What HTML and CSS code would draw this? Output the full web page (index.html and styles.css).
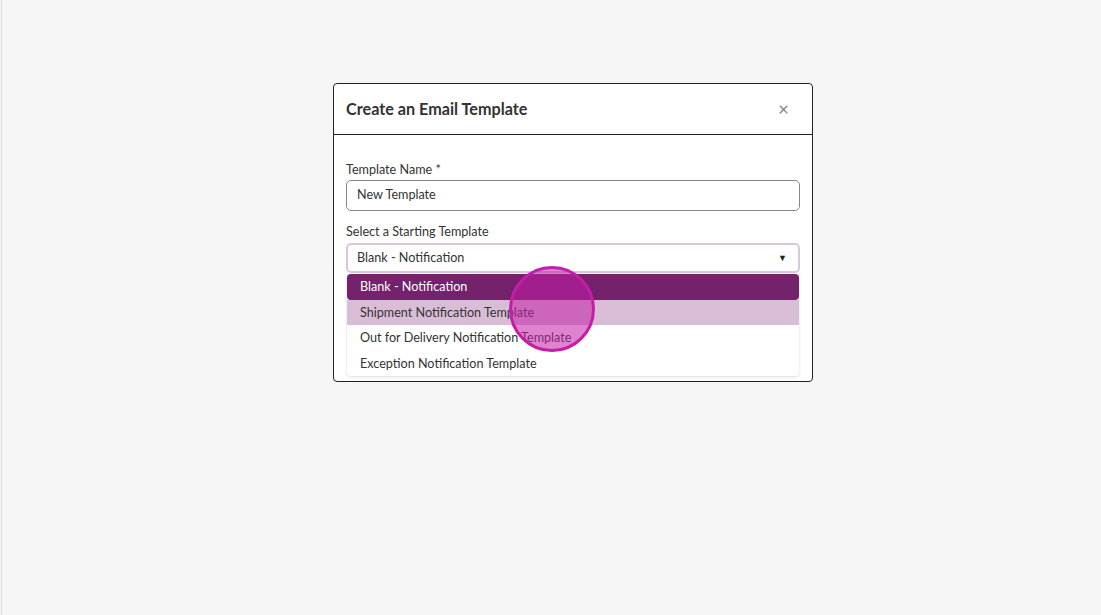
FILE: index.html
```html
<!DOCTYPE html>
<html>
<head>
<meta charset="utf-8">
<link rel="stylesheet" href="styles.css">
</head>
<body>
<div class="page">
  <div class="modal">
    <div class="modal-header">
      <h2 class="modal-title">Create an Email Template</h2>
      <span class="close">&times;</span>
    </div>
    <div class="modal-body">
      <label class="field-label">Template Name *</label>
      <div class="input">New Template</div>
      <label class="field-label second">Select a Starting Template</label>
      <div class="select">
        <span>Blank - Notification</span>
        <span class="caret">&#9660;</span>
      </div>
      <ul class="menu">
        <li class="item selected">Blank - Notification</li>
        <li class="item hover">Shipment Notification Template</li>
        <li class="item">Out for Delivery Notification Template</li>
        <li class="item">Exception Notification Template</li>
      </ul>
      <div class="click-marker"></div>
    </div>
  </div>
</div>
</body>
</html>
```
FILE: styles.css
```css
html, body {
  margin: 0;
  padding: 0;
  height: 100%;
}
body {
  background: #f5f6f5;
  font-family: Lato, "Open Sans", sans-serif;
  color: #333;
}
.page {
  height: 100%;
  box-sizing: border-box;
  border-left: 1px solid #dcdddc;
  margin-left: 1px;
  padding: 83px 0 0 331px;
}
.modal {
  width: 478px;
  background: #fff;
  border: 1px solid #222;
  border-radius: 4px;
}
.modal-header {
  height: 50px;
  border-bottom: 1px solid #222;
  display: flex;
  align-items: center;
  justify-content: space-between;
  padding: 0 23px 2px 12px;
  box-sizing: border-box;
  height: 51px;
}
.modal-title {
  margin: 0;
  font-size: 16.2px;
  font-weight: 700;
  color: #333;
}
.close {
  font-size: 19px;
  color: #888;
  line-height: 1;
}
.modal-body {
  position: relative;
  padding: 27px 12px 5px 12px;
}
.field-label {
  display: block;
  font-size: 12.6px;
  line-height: 16px;
  color: #333;
  margin-bottom: 2px;
}
.field-label.second {
  margin-top: 13px;
  margin-bottom: 3px;
}
.input {
  height: 29px;
  border: 1px solid #888;
  border-radius: 5px;
  display: flex;
  align-items: center;
  padding: 0 0 2px 10px;
  box-sizing: border-box;
  height: 31px;
  font-size: 12.6px;
}
.select {
  height: 30px;
  box-sizing: border-box;
  border: 2px solid #dcc6da;
  border-radius: 5px;
  display: flex;
  align-items: center;
  justify-content: space-between;
  padding: 0 11px 2px 9px;
  font-size: 12.6px;
}
.caret {
  font-size: 9px;
  color: #222;
}
.menu {
  list-style: none;
  margin: 1px 1px 0 1px;
  padding: 0;
  background: #fff;
  border-radius: 4px;
  box-shadow: 0 1px 3px rgba(0,0,0,0.15);
}
.item {
  height: 25.5px;
  line-height: 25px;
  padding-left: 13px;
  font-size: 12.6px;
  color: #333;
}
.item.selected {
  background: #74226b;
  color: #fff;
  border-radius: 4px;
}
.item.hover {
  background: #d9bdd6;
}
.click-marker {
  position: absolute;
  left: 175px;
  top: 131px;
  width: 80px;
  height: 80px;
  border-radius: 50%;
  border: 3px solid #c41ea8;
  background: rgba(196, 30, 168, 0.55);
}
```
